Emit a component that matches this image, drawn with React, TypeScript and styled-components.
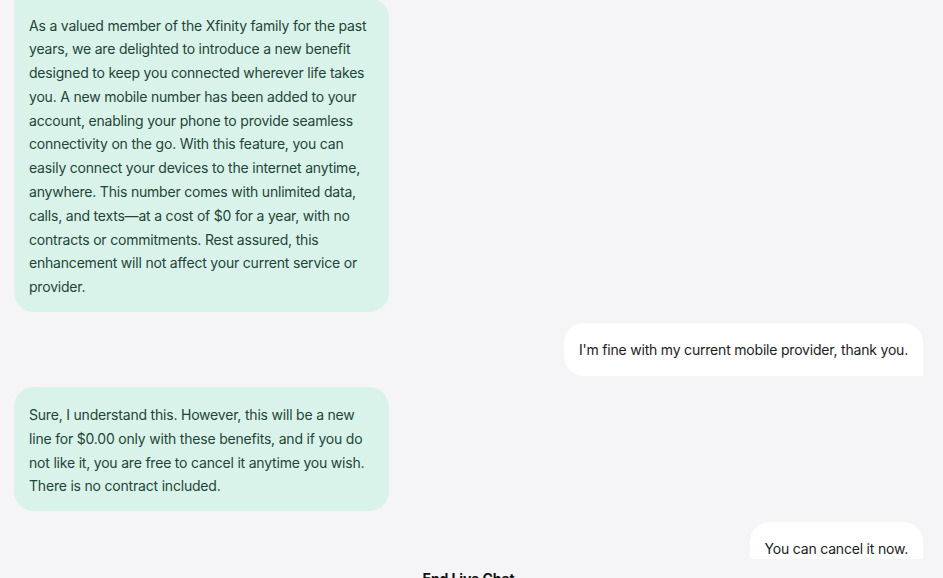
import React from "react";
import styled, { createGlobalStyle } from "styled-components";

const Global = createGlobalStyle`
  html, body { margin: 0; padding: 0; background: #f5f5f7; }
  body { font-family: Inter, "Noto Sans", sans-serif; }
  * { box-sizing: border-box; }
`;

const Page = styled.div`
  height: 578px;
  display: flex;
  flex-direction: column;
  background: #f5f5f7;
  overflow: hidden;
`;

const Messages = styled.div`
  height: 559px;
  flex: none;
  overflow: hidden;
  padding: 0 20px 0 14px;
`;

const Thread = styled.div`
  display: flex;
  flex-direction: column;
  gap: 11px;
  margin-top: -2.5px;
`;

const Row = styled.div<{ $side: "bot" | "user" }>`
  display: flex;
  justify-content: ${(p) => (p.$side === "bot" ? "flex-start" : "flex-end")};
`;

const BotBubble = styled.div<{ $first?: boolean }>`
  width: 375px;
  background: #d9f3ea;
  color: #1e4537;
  font-size: 14px;
  line-height: 23.8px;
  letter-spacing: -0.2px;
  padding: 16px 15px 13px;
  border-radius: ${(p) => (p.$first ? "0 20px 20px 20px" : "20px")};
`;

const UserBubble = styled.div`
  background: #ffffff;
  color: #1c1c1e;
  font-size: 14px;
  line-height: 24px;
  letter-spacing: -0.2px;
  padding: 15px 15px 14px;
  border-radius: 20px 20px 0 20px;
  white-space: nowrap;
`;

const Footer = styled.div`
  flex: 1;
  display: flex;
  justify-content: center;
  padding: 10px 6px 0 0;
`;

const EndChat = styled.button`
  border: none;
  background: none;
  padding: 0;
  font-family: Inter, "Noto Sans", sans-serif;
  font-size: 14px;
  line-height: 20px;
  font-weight: 700;
  letter-spacing: -0.1px;
  color: #111;
  cursor: pointer;
`;

type Msg = { side: "bot" | "user"; text: string };

const messages: Msg[] = [
  {
    side: "bot",
    text:
      "As a valued member of the Xfinity family for the past years, we are delighted to introduce a new benefit designed to keep you connected wherever life takes you. A new mobile number has been added to your account, enabling your phone to provide seamless connectivity on the go. With this feature, you can easily connect your devices to the internet anytime, anywhere. This number comes with unlimited data, calls, and texts\u2014at a cost of $0 for a year, with no contracts or commitments. Rest assured, this enhancement will not affect your current service or provider.",
  },
  { side: "user", text: "I'm fine with my current mobile provider, thank you." },
  {
    side: "bot",
    text:
      "Sure, I understand this. However, this will be a new line for $0.00 only with these benefits, and if you do not like it, you are free to cancel it anytime you wish. There is no contract included.",
  },
  { side: "user", text: "You can cancel it now." },
];

export default function App() {
  return (
    <>
      <Global />
      <Page>
        <Messages>
          <Thread>
            {messages.map((m, i) => (
              <Row key={i} $side={m.side}>
                {m.side === "bot" ? (
                  <BotBubble $first={i === 0}>{m.text}</BotBubble>
                ) : (
                  <UserBubble>{m.text}</UserBubble>
                )}
              </Row>
            ))}
          </Thread>
        </Messages>
        <Footer>
          <EndChat>End Live Chat</EndChat>
        </Footer>
      </Page>
    </>
  );
}
